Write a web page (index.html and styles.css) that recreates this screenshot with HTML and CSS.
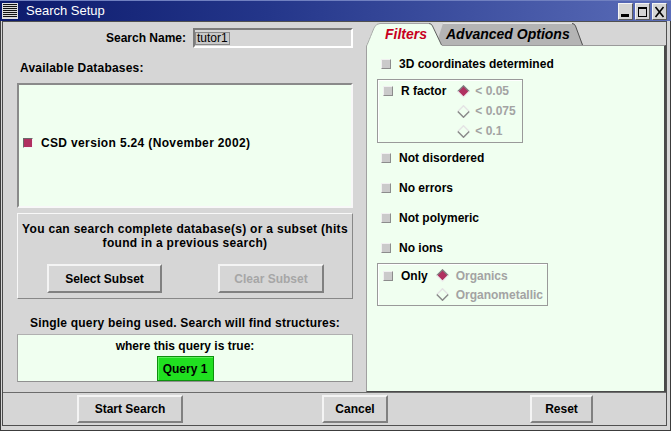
FILE: index.html
```html
<!DOCTYPE html>
<html>
<head>
<meta charset="utf-8">
<title>Search Setup</title>
<link rel="stylesheet" href="styles.css">
</head>
<body>
<div class="window">
  <div class="titlebar">
    <div class="wm-icon"></div>
    <div class="title">Search Setup</div>
    <div class="wm-buttons">
      <div class="wm-btn"><svg viewBox="0 0 15 17" width="15" height="17"><rect x="3" y="11" width="8" height="3" fill="#000"/></svg></div>
      <div class="wm-btn"><svg viewBox="0 0 15 17" width="15" height="17"><rect x="3.5" y="4.5" width="8" height="9" fill="none" stroke="#000"/><rect x="3" y="4" width="9" height="2" fill="#000"/></svg></div>
      <div class="wm-btn"><svg viewBox="0 0 15 17" width="15" height="17"><path d="M3.5 4 L11.5 14 M11.5 4 L3.5 14" stroke="#000" stroke-width="1.6" fill="none"/></svg></div>
    </div>
  </div>
  <div class="frame">
    <div class="inner">
      <div class="main">
        <div class="left">
          <div class="name-row">
            <span class="lbl">Search Name:</span>
            <div class="entry"><span class="sel">tutor1</span></div>
          </div>
          <div class="section-label">Available Databases:</div>
          <div class="dblist">
            <div class="dbitem"><span class="cb checked"></span><span class="dbname">CSD version 5.24 (November 2002)</span></div>
          </div>
          <div class="subset">
            <p class="subset-text">You can search complete database(s) or a subset (hits<br>found in a previous search)</p>
            <div class="subset-buttons">
              <div class="btn btn-select">Select Subset</div>
              <div class="btn btn-clear disabled">Clear Subset</div>
            </div>
          </div>
          <div class="query-label">Single query being used. Search will find structures:</div>
          <div class="querybox">
            <div class="query-text">where this query is true:</div>
            <div class="query-btn">Query 1</div>
          </div>
        </div>
        <div class="right">
          <div class="tabs">
            <div class="tab tab-active">
              <svg class="tab-shape" viewBox="0 0 77 24" width="77" height="24" preserveAspectRatio="none">
                <path d="M0 24 C2 20 6 9 8 5 Q10 1.5 14 1.5 L63 1.5 Q65.5 1.5 66.5 4 L76 24 Z" fill="#f0fff0"/>
                <path d="M0.5 24 C2.5 20 6.5 9 8.5 5 Q10.5 1.5 14 1.5 L63 1.5" fill="none" stroke="#a4a4a4"/>
                <path d="M63 1.5 Q65.5 1.5 66.5 4 L75.5 23" fill="none" stroke="#606060"/>
              </svg>
              <span class="tab-label">Filters</span>
            </div>
            <div class="tab tab-inactive">
              <svg class="tab-shape" viewBox="0 0 147 23" width="147" height="23" preserveAspectRatio="none">
                <path d="M0 23 L7 1.5 L136 1.5 Q138.5 1.5 139.5 4 L147 23 Z" fill="#b4b4b4"/>
                <path d="M7 1.5 L136 1.5" fill="none" stroke="#e2e2e2"/>
                <path d="M136 1.5 Q138.5 1.5 139.5 4 L146.5 23" fill="none" stroke="#505050"/>
              </svg>
              <span class="tab-label">Advanced Options</span>
            </div>
          </div>
          <div class="tabpanel">
            <div class="frow"><span class="cb"></span><span>3D coordinates determined</span></div>
            <div class="group group-r">
              <div class="group-head"><span class="cb"></span><span>R factor</span></div>
              <div class="radios">
                <div class="radio"><svg class="dia" viewBox="0 0 13 13" width="13" height="13"><polygon points="6.5,0.8 12.2,6.5 6.5,12.2 0.8,6.5" fill="#b03060"/><polyline points="0.8,6.5 6.5,0.8 12.2,6.5" fill="none" stroke="#808080" stroke-width="1.3"/><polyline points="0.8,6.5 6.5,12.2 12.2,6.5" fill="none" stroke="#eeeeee" stroke-width="1.3"/></svg><span class="dis">&lt; 0.05</span></div>
                <div class="radio"><svg class="dia" viewBox="0 0 13 13" width="13" height="13"><polyline points="0.8,6.5 6.5,0.8 12.2,6.5" fill="none" stroke="#e4e4e4" stroke-width="1.5"/><polyline points="0.8,6.5 6.5,12.2 12.2,6.5" fill="none" stroke="#8a8a8a" stroke-width="1.5"/></svg><span class="dis">&lt; 0.075</span></div>
                <div class="radio"><svg class="dia" viewBox="0 0 13 13" width="13" height="13"><polyline points="0.8,6.5 6.5,0.8 12.2,6.5" fill="none" stroke="#e4e4e4" stroke-width="1.5"/><polyline points="0.8,6.5 6.5,12.2 12.2,6.5" fill="none" stroke="#8a8a8a" stroke-width="1.5"/></svg><span class="dis">&lt; 0.1</span></div>
              </div>
            </div>
            <div class="frow"><span class="cb"></span><span>Not disordered</span></div>
            <div class="frow"><span class="cb"></span><span>No errors</span></div>
            <div class="frow"><span class="cb"></span><span>Not polymeric</span></div>
            <div class="frow"><span class="cb"></span><span>No ions</span></div>
            <div class="group group-only">
              <div class="group-head"><span class="cb"></span><span>Only</span></div>
              <div class="radios">
                <div class="radio"><svg class="dia" viewBox="0 0 13 13" width="13" height="13"><polygon points="6.5,0.8 12.2,6.5 6.5,12.2 0.8,6.5" fill="#b03060"/><polyline points="0.8,6.5 6.5,0.8 12.2,6.5" fill="none" stroke="#808080" stroke-width="1.3"/><polyline points="0.8,6.5 6.5,12.2 12.2,6.5" fill="none" stroke="#eeeeee" stroke-width="1.3"/></svg><span class="dis">Organics</span></div>
                <div class="radio"><svg class="dia" viewBox="0 0 13 13" width="13" height="13"><polyline points="0.8,6.5 6.5,0.8 12.2,6.5" fill="none" stroke="#e4e4e4" stroke-width="1.5"/><polyline points="0.8,6.5 6.5,12.2 12.2,6.5" fill="none" stroke="#8a8a8a" stroke-width="1.5"/></svg><span class="dis">Organometallic</span></div>
              </div>
            </div>
          </div>
        </div>
      </div>
      <div class="bottombar">
        <div class="btn btn-start">Start Search</div>
        <div class="btn btn-cancel">Cancel</div>
        <div class="btn btn-reset">Reset</div>
      </div>
    </div>
  </div>
</div>
</body>
</html>
```

FILE: styles.css
```css
* { box-sizing: border-box; }
html, body { margin: 0; padding: 0; }
body {
  width: 671px;
  height: 431px;
  overflow: hidden;
  background: #d6d6d6;
  font-family: "Liberation Sans", Arial, sans-serif;
  font-size: 12px;
  font-weight: bold;
  line-height: 14px;
  color: #000;
}
.window {
  width: 671px;
  height: 431px;
  display: flex;
  flex-direction: column;
  background: #d6d6d6;
}

/* title bar */
.titlebar {
  height: 21px;
  display: flex;
  align-items: center;
  background: linear-gradient(to right, #0c1a6c 0%, #24368a 40%, #5a6cb8 100%);
  border-top: 1px solid #7080c0;
  padding: 0 4px 0 2px;
}
.wm-icon {
  width: 16px;
  height: 16px;
  background: repeating-linear-gradient(to bottom, #111 0px, #111 1px, #d8d8d8 1px, #d8d8d8 2px);
  border: 1px solid #e0e0e0;
}
.title {
  margin-left: 8px;
  color: #fff;
  font-weight: normal;
  font-size: 13px;
  flex: 1;
}
.wm-buttons { display: flex; gap: 2px; }
.wm-btn {
  width: 15px;
  height: 17px;
  background: #d4d4d4;
  border: 1px solid;
  border-color: #f4f4f4 #5a5a5a #5a5a5a #f4f4f4;
  display: flex;
}
.wm-btn svg { margin: -1px; }

/* frame */
.frame {
  flex: 1;
  display: flex;
  border: 1px solid #3c3c3c;
  border-top: none;
  padding: 0 3px 4px 1px;
}
.inner {
  flex: 1;
  display: flex;
  flex-direction: column;
  border: 1px solid #505050;
  border-left-color: #4a4a4a;
}
.main {
  height: 370px;
  display: flex;
}

/* left column */
.left {
  width: 363px;
  padding: 6px 13px 0 14px;
  display: flex;
  flex-direction: column;
}
.name-row {
  display: flex;
  justify-content: flex-end;
  align-items: center;
  height: 20px;
}
.lbl { margin-right: 7px; }
.entry {
  width: 160px;
  height: 20px;
  border: 2px solid;
  border-color: #7c7c7c #ffffff #ffffff #7c7c7c;
  background: #d6d6d6;
  display: flex;
  align-items: center;
}
.sel {
  font-weight: normal;
  height: 13px;
  line-height: 11px;
  padding: 0 1px;
  background: #c9c9c9;
  border: 1px solid #8a8a8a;
}
.section-label {
  margin-top: 13px;
  padding-left: 3px;
  letter-spacing: 0.2px;
}
.dblist {
  margin-top: 8px;
  height: 125px;
  background: #f0fff0;
  border: 2px solid;
  border-color: #8a8a8a #f8f8f8 #f8f8f8 #8a8a8a;
  display: flex;
  align-items: center;
  padding: 0 0 5px 4px;
}
.dbitem { display: flex; align-items: center; gap: 8px; }
.dbname { letter-spacing: 0.35px; }

.cb {
  display: inline-block;
  width: 10px;
  height: 10px;
  background: #cacaca;
  border: 1px solid;
  border-color: #f0f0f0 #8c8c8c #8c8c8c #f0f0f0;
}
.cb.checked {
  background: #b03060;
  border-color: #6a6a6a #f4f4f4 #f4f4f4 #6a6a6a;
}

.subset {
  margin-top: 5px;
  height: 86px;
  border: 1px solid;
  border-color: #f8f8f8 #888888 #888888 #f8f8f8;
  padding: 8px 0 0;
}
.subset-text {
  margin: 0;
  text-align: center;
  letter-spacing: 0.3px;
}
.subset-buttons {
  margin-top: 14px;
  display: flex;
  justify-content: space-between;
  padding: 0 28px 0 29px;
}
.btn {
  height: 29px;
  display: flex;
  align-items: center;
  justify-content: center;
  background: #d6d6d6;
  border: 2px solid;
  border-color: #f4f4f4 #808080 #808080 #f4f4f4;
}
.btn-select { width: 115px; }
.btn-clear { width: 106px; }
.disabled { color: #a6a6a6; }

.query-label {
  margin-top: 17px;
  text-align: center;
  letter-spacing: 0.2px;
}
.querybox {
  margin-top: 4px;
  height: 48px;
  background: #f0fff0;
  border: 1px solid;
  border-color: #b0b0b0 #a0a0a0 #909090 #a0a0a0;
  display: flex;
  flex-direction: column;
  align-items: center;
  padding-top: 4px;
}
.query-btn {
  margin-top: 3px;
  width: 57px;
  height: 25px;
  background: #20e020;
  border: 1px solid #0e900e;
  box-shadow: inset 1px 1px 0 #5cf05c;
  display: flex;
  align-items: center;
  justify-content: center;
}

/* right column */
.right {
  width: 300px;
  display: flex;
  flex-direction: column;
}
.tabs {
  height: 24px;
  margin-bottom: -1px;
  display: flex;
  align-items: flex-start;
}
.tab {
  position: relative;
  display: flex;
  align-items: center;
  font-style: italic;
  font-size: 14px;
}
.tab-shape {
  position: absolute;
  left: 0;
  top: 0;
}
.tab-label { position: relative; }
.tab-active {
  z-index: 2;
  width: 77px;
  height: 24px;
  padding-left: 19px;
  color: #c8001e;
}
.tab-inactive {
  z-index: 1;
  width: 147px;
  height: 23px;
  margin-left: -7px;
  padding-left: 10px;
  padding-top: 1px;
}
.tabpanel {
  flex: 1;
  background: #f0fff0;
  border: 1px solid;
  border-color: #9a9a9a #4a4a4a #4a4a4a #a0a0a0;
  border-right-width: 2px;
  padding: 3px 0 0 10px;
  display: flex;
  flex-direction: column;
  align-items: flex-start;
}
.frow {
  height: 30px;
  display: flex;
  align-items: center;
  gap: 8px;
  padding-left: 4px;
}
.group {
  display: flex;
  align-items: flex-start;
  border: 1px solid #9a9a9a;
  box-shadow: inset 1px 1px 0 #ffffff;
  padding: 1px 6px 1px 5px;
}
.group-head {
  display: flex;
  align-items: center;
  gap: 8px;
  height: 20px;
}
.radio {
  display: flex;
  align-items: center;
  gap: 5px;
  height: 20px;
}
.group-r .radios { margin-left: 11px; }
.group-only { padding: 2px 4px 1px 5px; }
.group-only .group-head { height: 19px; }
.group-only .radio { height: 19px; gap: 7px; }
.group-only .radios { margin-left: 8px; }
.dia { display: block; }
.dis { color: #a3a3a3; }

/* bottom bar */
.bottombar {
  height: 33px;
  display: flex;
  align-items: flex-start;
  border-top: 1px solid #6c6c6c;
  padding: 2px 0 0 74px;
}
.bottombar .btn { height: 28px; }
.btn-start { width: 106px; }
.btn-cancel { width: 66px; margin-left: 139px; }
.btn-reset { width: 63px; margin-left: 142px; }
```
